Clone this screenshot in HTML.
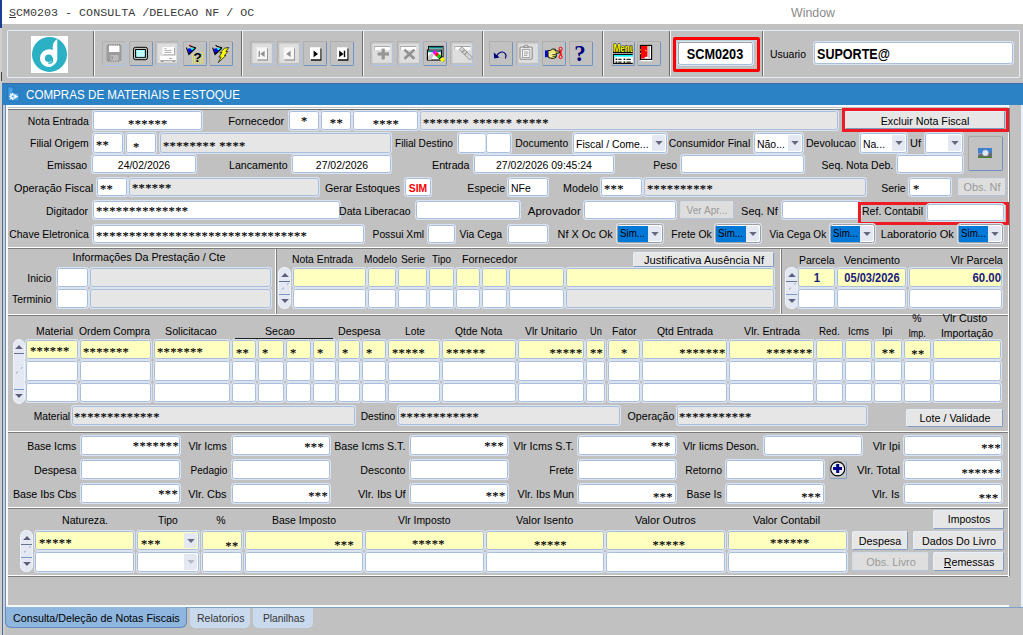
<!DOCTYPE html>
<html><head><meta charset="utf-8"><title>SCM0203</title>
<style>
html,body{margin:0;padding:0}
body{width:1023px;height:635px;overflow:hidden;background:#c1c1c1;font-family:"Liberation Sans",sans-serif;font-size:12px;color:#000;position:relative}
#r{position:absolute;left:0;top:0;width:1023px;height:635px;overflow:hidden}
#r div,#r span,#r svg{position:absolute}
.t{white-space:nowrap;display:block}
.s{font:12.5px/16px "Liberation Serif",serif;letter-spacing:.35px;-webkit-text-stroke:.15px #000}
.f{box-sizing:content-box;border:1px solid #a9bedd;border-radius:2.5px;background:#fff;box-shadow:0 0 0 1px #dbe3ef}
.fy{background:#ffffc0}
.fs{border-color:#9c9ea4}
.fg{background:#e6e6e6}
.da{background:#e4e8f2;border-radius:0 2px 2px 0}
.b{box-sizing:content-box;border:1px solid;border-color:#e8eef8 #7f9cc4 #7f9cc4 #e8eef8;background:#e6e6e6;border-radius:2px}
.bd{border-color:#d4dcea #b4c4dc #b4c4dc #d4dcea;background:#dedede}
.hl{height:1px;background:#fff;box-shadow:0 1px 0 #7c7c7c}
.vl{width:1px;background:#fff;box-shadow:1px 0 0 #7c7c7c}
.red{border:3px solid #ff0000;border-radius:2px}
.sb{border:1px solid #eef2f9;border-radius:6px;background:#e4e8f2}
.tb{border:1px solid;border-color:#adadad #6f92c2 #6f92c2 #adadad;border-radius:2px}
.tbd{border-color:#b2b2b2 #abc6ec #abc6ec #b2b2b2}
</style></head>
<body><div id="r">
<div style="left:0;top:0;width:1023px;height:24px;background:#fff"></div>
<div style="left:0;top:0;width:2px;height:28px;background:#1c3f94"></div>
<span class="t" style="left:9px;top:4.6px;font-family:'Liberation Mono',monospace;font-size:11px;line-height:16px;color:#3a3a3a;transform-origin:0 50%;transform:scaleX(1.062)"><u>S</u>CM0203 - CONSULTA /DELECAO NF / OC</span>
<span class="t" style="top:5.84px;font-size:12px;line-height:14px;color:#8a8a8a;left:791.00px;transform-origin:0 50%;transform:scaleX(1.0310);">Window</span>
<div style="left:7px;top:30px;width:1011px;height:46px;border:1px solid #e4ecf8;border-radius:1px"></div>
<div style="left:31px;top:36px;width:37px;height:37px;background:#fff"></div>
<svg style="left:28px;top:33px" width="44" height="43" viewBox="28 33 44 43"><circle cx="49.5" cy="54.4" r="17.5" fill="#2bb0c4"/><path d="M57.3 39 L57.3 59.6 Q56.4 64.6 50.4 66.9 A9 9 0 0 1 40 58.2 A9 9 0 0 1 49.4 49.2 Q51.4 49.4 52.7 50.3 L52.7 46.4 Q53 41.6 57.3 39 Z" fill="#fff"/><circle cx="48.7" cy="58.2" r="3.8" fill="#2bb0c4"/><path d="M52.4 57.4 L52.4 61.6 Q51.6 63.4 48.4 63.3" fill="none" stroke="#2bb0c4" stroke-width="1.4"/></svg>
<div style="left:93px;top:31px;width:1px;height:45px;background:#6e6e6e"></div>
<div style="left:94px;top:31px;width:1px;height:45px;background:#f4f4f4"></div>
<div style="left:241px;top:31px;width:1px;height:45px;background:#6e6e6e"></div>
<div style="left:242px;top:31px;width:1px;height:45px;background:#f4f4f4"></div>
<div style="left:362px;top:31px;width:1px;height:45px;background:#6e6e6e"></div>
<div style="left:363px;top:31px;width:1px;height:45px;background:#f4f4f4"></div>
<div style="left:482px;top:31px;width:1px;height:45px;background:#6e6e6e"></div>
<div style="left:483px;top:31px;width:1px;height:45px;background:#f4f4f4"></div>
<div style="left:602px;top:31px;width:1px;height:45px;background:#6e6e6e"></div>
<div style="left:603px;top:31px;width:1px;height:45px;background:#f4f4f4"></div>
<div style="left:669px;top:31px;width:1px;height:45px;background:#6e6e6e"></div>
<div style="left:670px;top:31px;width:1px;height:45px;background:#f4f4f4"></div>
<div style="left:762px;top:31px;width:1px;height:45px;background:#6e6e6e"></div>
<div style="left:763px;top:31px;width:1px;height:45px;background:#f4f4f4"></div>
<div class="tb tbd" style="left:102px;top:41px;width:22px;height:23px"></div>
<div class="tb" style="left:129px;top:41px;width:22px;height:23px"></div>
<div class="tb tbd" style="left:155px;top:41px;width:22px;height:23px"></div>
<div class="tb" style="left:183px;top:41px;width:22px;height:23px"></div>
<div class="tb" style="left:209px;top:41px;width:22px;height:23px"></div>
<div class="tb tbd" style="left:250px;top:41px;width:22px;height:23px"></div>
<div class="tb tbd" style="left:277px;top:41px;width:22px;height:23px"></div>
<div class="tb" style="left:303px;top:41px;width:22px;height:23px"></div>
<div class="tb" style="left:330px;top:41px;width:22px;height:23px"></div>
<div class="tb tbd" style="left:370px;top:41px;width:22px;height:23px"></div>
<div class="tb tbd" style="left:397px;top:41px;width:22px;height:23px"></div>
<div class="tb" style="left:423px;top:41px;width:22px;height:23px"></div>
<div class="tb tbd" style="left:450px;top:41px;width:22px;height:23px"></div>
<div class="tb" style="left:489px;top:41px;width:22px;height:23px"></div>
<div class="tb tbd" style="left:516px;top:41px;width:22px;height:23px"></div>
<div class="tb" style="left:542px;top:41px;width:22px;height:23px"></div>
<div class="tb" style="left:569px;top:41px;width:22px;height:23px"></div>
<div class="tb" style="left:611px;top:41px;width:22px;height:23px"></div>
<div class="tb" style="left:637px;top:41px;width:22px;height:23px"></div>
<svg style="left:100px;top:38px" width="570" height="32" viewBox="100 38 570 32"><rect x="157.4" y="43.6" width="19.4" height="19.2" fill="#dedede"/><rect x="252.4" y="43.6" width="19.4" height="19.2" fill="#dedede"/><rect x="279.4" y="43.6" width="19.4" height="19.2" fill="#dedede"/><rect x="372.4" y="43.6" width="19.4" height="19.2" fill="#dedede"/><rect x="399.4" y="43.6" width="19.4" height="19.2" fill="#dedede"/><rect x="452.4" y="43.6" width="19.4" height="19.2" fill="#dedede"/><rect x="518.4" y="43.6" width="19.4" height="19.2" fill="#dedede"/><rect x="106.5" y="45" width="15" height="16" fill="#9c9c9c"/><rect x="109" y="45.5" width="10.5" height="6.5" fill="#fff"/><rect x="110.5" y="55" width="8" height="6" fill="#bcbcbc"/><rect x="111.5" y="56" width="1.5" height="3.5" fill="#9c9c9c"/><path d="M108 44.8H120" stroke="#666" stroke-width="1" stroke-dasharray="1 1.2"/><path d="M108 61.2H120" stroke="#777" stroke-width="1" stroke-dasharray="1.2 1.2"/><rect x="133.5" y="47.3" width="14" height="12.4" rx="2" fill="#c0c0c0" stroke="#000" stroke-width="1"/><rect x="135.6" y="49.5" width="9.8" height="7.8" fill="#9ff" stroke="#000" stroke-width="1"/><rect x="137" y="51" width="7" height="1.1" fill="#e8ffff"/><rect x="137" y="53.2" width="7" height="1.1" fill="#e8ffff"/><rect x="137" y="55.4" width="7" height="1.1" fill="#e8ffff"/><rect x="162.5" y="47" width="11.5" height="7.5" fill="#fff"/><rect x="174" y="48" width="1" height="7" fill="#aaa"/><rect x="163" y="54.4" width="11.5" height="1" fill="#aaa"/><rect x="164.5" y="48.3" width="2" height="0.8" fill="#999"/><rect x="164.5" y="50" width="7" height="0.8" fill="#999"/><rect x="164.5" y="52" width="7" height="0.8" fill="#999"/><rect x="160" y="55.8" width="16" height="4.4" fill="#fff"/><rect x="160" y="60" width="16" height="1" fill="#b0b0b0"/><rect x="169" y="58" width="3.5" height="1" fill="#aaa"/><rect x="161" y="61" width="2.5" height="1" fill="#999"/><rect x="172.5" y="61" width="2.5" height="1" fill="#999"/><path d="M187.6 48.800000000000004L189 54.2L192.6 50.800000000000004L190.4 48.2Z" fill="#0000f0" /><path d="M190.4 48.0L195.2 48.0L192.4 51.0Z" fill="#0ff" /><path d="M186.4 47.6L188.9 54.5L195.6 48.0" fill="none" stroke="#000" stroke-width="1.1" stroke-linejoin="miter"/><path d="M189.4 45.2L191.2 46.6L195.8 47.800000000000004" fill="none" stroke="#000" stroke-width="1.1"/><rect x="189.8" y="44.8" width="1.4" height="1.2" fill="#f00"/><rect x="200.12" y="52.2" width="1" height="1" fill="#ff0"/><rect x="202.15" y="52.2" width="1" height="1" fill="#ff0"/><rect x="192.0" y="54.23" width="1" height="1" fill="#ff0"/><rect x="200.12" y="54.23" width="1" height="1" fill="#ff0"/><rect x="202.15" y="54.23" width="1" height="1" fill="#ff0"/><rect x="192.0" y="56.26" width="1" height="1" fill="#ff0"/><rect x="194.03" y="56.26" width="1" height="1" fill="#ff0"/><rect x="200.12" y="56.26" width="1" height="1" fill="#ff0"/><rect x="202.15" y="56.26" width="1" height="1" fill="#ff0"/><rect x="192.0" y="58.29" width="1" height="1" fill="#ff0"/><rect x="194.03" y="58.29" width="1" height="1" fill="#ff0"/><rect x="198.09" y="58.29" width="1" height="1" fill="#ff0"/><rect x="200.12" y="58.29" width="1" height="1" fill="#ff0"/><rect x="202.15" y="58.29" width="1" height="1" fill="#ff0"/><rect x="192.0" y="60.32" width="1" height="1" fill="#ff0"/><rect x="194.03" y="60.32" width="1" height="1" fill="#ff0"/><rect x="198.09" y="60.32" width="1" height="1" fill="#ff0"/><rect x="200.12" y="60.32" width="1" height="1" fill="#ff0"/><rect x="202.15" y="60.32" width="1" height="1" fill="#ff0"/><rect x="192.0" y="62.35" width="1" height="1" fill="#ff0"/><rect x="194.03" y="62.35" width="1" height="1" fill="#ff0"/><rect x="196.06" y="62.35" width="1" height="1" fill="#ff0"/><rect x="198.09" y="62.35" width="1" height="1" fill="#ff0"/><rect x="200.12" y="62.35" width="1" height="1" fill="#ff0"/><rect x="202.15" y="62.35" width="1" height="1" fill="#ff0"/><text x="193.6" y="61.9" font-family="Liberation Sans" font-weight="bold" font-size="13.5" fill="#000">?</text><path d="M213.79999999999998 48.800000000000004L215.2 54.2L218.79999999999998 50.800000000000004L216.6 48.2Z" fill="#0000f0" /><path d="M216.6 48.0L221.39999999999998 48.0L218.6 51.0Z" fill="#0ff" /><path d="M212.6 47.6L215.1 54.5L221.79999999999998 48.0" fill="none" stroke="#000" stroke-width="1.1" stroke-linejoin="miter"/><path d="M215.6 45.2L217.39999999999998 46.6L222.0 47.800000000000004" fill="none" stroke="#000" stroke-width="1.1"/><path d="M224.6 48.2L228.8 47.4L225.8 51.6L227.8 51.4L224.4 55.6L226 55.4L218.2 62.6L221.2 57L218.8 57.2L222 52.6L219.8 52.8Z" fill="#ff0" stroke="#222" stroke-width=".8" stroke-linejoin="miter"/><rect x="257.6" y="48.5" width="10.4" height="12.2" fill="#9a9a9a"/><rect x="256.6" y="47.3" width="10.4" height="12" fill="#f6f6f6"/><rect x="258.6" y="50.9" width="1.3" height="6" fill="#909090"/><path d="M264.6 50.699999999999996V57.1L260.2 53.9Z" fill="#909090" /><rect x="284.6" y="48.5" width="10.4" height="12.2" fill="#9a9a9a"/><rect x="283.6" y="47.3" width="10.4" height="12" fill="#f6f6f6"/><path d="M290.6 50.699999999999996V57.1L286.2 53.9Z" fill="#909090" /><rect x="311.0" y="48.5" width="10.4" height="12.2" fill="#000"/><rect x="310.0" y="47.3" width="10.4" height="12" fill="#fff"/><path d="M313.59999999999997 50.5V57.3L318.0 53.9Z" fill="#000" /><rect x="338.0" y="48.5" width="10.4" height="12.2" fill="#000"/><rect x="337.0" y="47.3" width="10.4" height="12" fill="#fff"/><path d="M339.2 50.5V57.3L343.59999999999997 53.9Z" fill="#000" /><rect x="343.8" y="50.699999999999996" width="1.4" height="6.4" fill="#000"/><rect x="374.4" y="46.6" width="15.6" height="3.4" fill="#fff"/><rect x="374.4" y="46.2" width="15.6" height="0.8" fill="#999"/><rect x="374.0" y="46.2" width="0.8" height="3.8" fill="#aaa"/><rect x="381.6" y="48.6" width="3.2" height="10.8" fill="#969696"/><rect x="377.6" y="52.4" width="11.4" height="3.2" fill="#969696"/><rect x="400.6" y="46.6" width="15.6" height="3.4" fill="#fff"/><rect x="400.6" y="46.2" width="15.6" height="0.8" fill="#999"/><rect x="400.20000000000005" y="46.2" width="0.8" height="3.8" fill="#aaa"/><path d="M404.4 49.6L414.4 58.8M414.4 49.6L404.4 58.8" stroke="#909090" stroke-width="2.6"/><rect x="428.6" y="46.4" width="14.4" height="10.6" fill="#fff"/><rect x="428.6" y="46.4" width="14.4" height="10.6" fill="none" stroke="#000" stroke-width="1"/><rect x="429.2" y="47" width="13.2" height="1.6" fill="#088"/><rect x="427.4" y="50" width="14" height="10" fill="#fff" stroke="#000" stroke-width="1.1"/><rect x="428" y="50.6" width="12.8" height="1.6" fill="#088"/><path d="M428 60L428 56.5L431.5 53L434 55L431 60Z" fill="#c8c8c8" /><g transform="translate(433.6,51.4) rotate(43)"><rect x="0" y="-1.8" width="3.2" height="3.6" fill="#f0f"/><rect x="3.2" y="-1.8" width="2.6" height="3.6" fill="#f00"/><rect x="5.8" y="-1.8" width="3" height="3.6" fill="#0c0"/><rect x="8.8" y="-1.8" width="1.2" height="3.6" fill="#000"/><rect x="10" y="-1.8" width="3.6" height="3.6" fill="#ff0"/><path d="M13.6 -1.8L15.2 0L13.6 1.8Z" fill="#bb0"/></g><rect x="454.8" y="46.6" width="15.6" height="3.4" fill="#fff"/><rect x="454.8" y="46.2" width="15.6" height="0.8" fill="#999"/><rect x="454.40000000000003" y="46.2" width="0.8" height="3.8" fill="#aaa"/><g transform="translate(460.6,48) rotate(45)"><rect x="0" y="-1.8" width="15" height="3.8" fill="#d2d2d2" stroke="#9a9a9a" stroke-width=".9"/><rect x="3.6" y="-2" width="1" height="4.4" fill="#8a8a8a"/><rect x="7" y="-2" width="1" height="4.4" fill="#8a8a8a"/></g><path d="M496.6 56.6C498 51.8 503 50.8 505.2 53.6C506.6 55.4 506 57.2 505.2 58.4" fill="none" stroke="#000080" stroke-width="1.05"/><path d="M493.8 52.6L494.2 58.4L499.6 57.4Z" fill="#000080" /><rect x="520" y="47" width="12.2" height="12.2" rx="1.2" fill="#ececec" stroke="#8c8c8c" stroke-width="1.1"/><rect x="522.4" y="49.6" width="7.4" height="8" fill="#f4f4f4" stroke="#9a9a9a" stroke-width=".9"/><path d="M523.6 47.6V46.4H524.8V45.2H527.4V46.4H528.6V47.6Z" fill="#e0e0e0" stroke="#8c8c8c" stroke-width=".9"/><rect x="524" y="51.6" width="4.4" height="0.8" fill="#999"/><rect x="524" y="53.4" width="4.4" height="0.8" fill="#999"/><rect x="524" y="55.2" width="3.4" height="0.8" fill="#999"/><rect x="545" y="50.4" width="2.8" height="6.8" fill="#0000e0"/><path d="M548 50.6L550.6 50.4L552.6 49L555.4 49.2L555 50.8L559.6 51.2L559.6 53L555.6 53.2L556.4 54.2L556.2 57.2L553.6 58.4L550.4 58.2L548 57Z" fill="#e8e060" stroke="#000" stroke-width=".9"/><rect x="549.2" y="51.4" width="0.8" height="0.8" fill="#fff"/><rect x="550.8000000000001" y="51.4" width="0.8" height="0.8" fill="#fff"/><rect x="552.4000000000001" y="51.4" width="0.8" height="0.8" fill="#fff"/><rect x="554.0" y="51.4" width="0.8" height="0.8" fill="#fff"/><rect x="550.0" y="53.0" width="0.8" height="0.8" fill="#fff"/><rect x="551.6" y="53.0" width="0.8" height="0.8" fill="#fff"/><rect x="553.2" y="53.0" width="0.8" height="0.8" fill="#fff"/><rect x="554.8" y="53.0" width="0.8" height="0.8" fill="#fff"/><rect x="549.2" y="54.6" width="0.8" height="0.8" fill="#fff"/><rect x="550.8000000000001" y="54.6" width="0.8" height="0.8" fill="#fff"/><rect x="552.4000000000001" y="54.6" width="0.8" height="0.8" fill="#fff"/><rect x="554.0" y="54.6" width="0.8" height="0.8" fill="#fff"/><rect x="550.0" y="56.2" width="0.8" height="0.8" fill="#fff"/><rect x="551.6" y="56.2" width="0.8" height="0.8" fill="#fff"/><rect x="553.2" y="56.2" width="0.8" height="0.8" fill="#fff"/><rect x="554.8" y="56.2" width="0.8" height="0.8" fill="#fff"/><path d="M552.4 54.6H556M552.6 56.4H556" stroke="#000" stroke-width=".7"/><circle cx="560.6" cy="48.8" r="1.6" fill="none" stroke="#f00" stroke-width="1"/><circle cx="560.6" cy="57" r="1.6" fill="none" stroke="#f00" stroke-width="1"/><path d="M559.8 50.2L561.6 55.4M561.6 50.4L559.8 55.6" stroke="#f00" stroke-width="1"/><text x="574.2" y="61.2" font-family="Liberation Serif" font-weight="bold" font-size="24" fill="#000080" textLength="11.4" lengthAdjust="spacingAndGlyphs">?</text><clipPath id="mc"><rect x="611.5" y="42" width="21.3" height="23"/></clipPath><g clip-path="url(#mc)"><rect x="613" y="51.6" width="21" height="1.4" fill="#000"/><text x="613.4" y="51.6" font-family="Liberation Sans" font-weight="bold" font-size="10.5" fill="#ff0" stroke="#000" stroke-width="1.2" paint-order="stroke" textLength="21.4" lengthAdjust="spacingAndGlyphs">Menu</text><rect x="613.6" y="54.4" width="22" height="9" fill="#fff" stroke="#000" stroke-width="1.1"/><rect x="614.2" y="55" width="20" height="1.6" fill="#0ff"/><rect x="615.6" y="58.6" width="1.6" height="1.4" fill="#000"/><rect x="618.2" y="58.800000000000004" width="3.4" height="1" fill="#000"/><rect x="623.6" y="58.6" width="1.6" height="1.4" fill="#000"/><rect x="626.4" y="58.800000000000004" width="4.4" height="1" fill="#000"/><rect x="615.6" y="61.4" width="1.6" height="1.4" fill="#000"/><rect x="618.2" y="61.6" width="3.4" height="1" fill="#000"/><rect x="623.6" y="61.4" width="1.6" height="1.4" fill="#000"/><rect x="626.4" y="61.6" width="4.4" height="1" fill="#000"/></g><rect x="640.6" y="59.4" width="11.6" height="1.8" fill="#fff"/><rect x="640.4" y="45.4" width="11.2" height="14" fill="#fff" stroke="#000" stroke-width="1.1"/><rect x="647.6" y="46" width="2.4" height="12" fill="#c8c8c8"/><path d="M641 46H647.4V56.4L644.6 57.2V58.6H641Z" fill="#f00" /><rect x="645.2" y="50" width="1.2" height="1.2" fill="#ff0"/><rect x="640" y="49.4" width="1" height="1" fill="#ff0"/><rect x="640" y="53" width="1" height="1" fill="#ff0"/></svg>
<div class="red" style="left:673px;top:37px;width:81px;height:29px;border-color:#ff0000;border-radius:2px"></div>
<div style="left:676px;top:40px;width:81px;height:2px;background:#b9cfda"></div><div style="left:676px;top:40px;width:2px;height:29px;background:#b9cfda"></div>
<div class="f" style="left:678px;top:42px;width:73px;height:21px"></div>
<div style="left:678px;top:42px;width:74px;height:1px;background:#a2a2a2"></div><div style="left:678px;top:42px;width:1px;height:22px;background:#a2a2a2"></div>
<span class="t" style="top:46.05px;font-size:14px;line-height:16px;font-weight:bold;left:715.30px;transform:translateX(-50%) scaleX(0.9076);">SCM0203</span>
<span class="t" style="top:48.49px;font-size:11px;line-height:13px;left:770.40px;transform-origin:0 50%;transform:scaleX(0.9498);">Usuario</span>
<div class="f" style="left:814px;top:42px;width:197px;height:20px"></div>
<span class="t" style="top:45.63px;font-size:14.5px;line-height:16.5px;font-weight:bold;left:817.00px;transform-origin:0 50%;transform:scaleX(0.8666);">SUPORTE@</span>
<div style="left:2px;top:83px;width:1021px;height:22px;background:#2b82c4"></div>
<div style="left:2px;top:83px;width:1021px;height:1px;background:#3a6aa8"></div>
<div style="left:2px;top:104px;width:1px;height:531px;background:#4a6c9c"></div>
<div style="left:0;top:28px;width:2px;height:607px;background:#cfcfcf"></div>
<div style="left:1px;top:72px;width:1px;height:9px;background:#444"></div>
<svg style="left:6px;top:85px" width="15" height="18" viewBox="6 85 15 18"><path d="M7.9 86.9H13.2V92.6H19V100.9H7.9Z" fill="#469fe2" stroke="#2473b6" stroke-width=".9"/><path d="M15.6 87.2V90H18.3Z" fill="#469fe2" stroke="#2473b6" stroke-width=".7"/><path d="M13 93.2V99.7A3.3 3.3 0 0 1 13 93.2Z" fill="#fff"/><path d="M13 92.9V100 M9.3 96.4H13 M10.2 93.7L13 96.4 M10.2 99.2L13 96.4" stroke="#fff" stroke-width="1.1"/><circle cx="12.4" cy="96.4" r=".9" fill="#469fe2"/><path d="M14.2 94V99L18.3 96.5Z" fill="#fff"/></svg>
<span class="t" style="top:87.74px;font-size:12px;line-height:14px;color:#fff;left:26.30px;transform-origin:0 50%;transform:scaleX(0.9686);">COMPRAS DE MATERIAIS E ESTOQUE</span>
<div style="left:6px;top:105px;width:1003px;height:502px;background:#f6f9ff"></div>
<div style="left:8px;top:107px;width:1000px;height:498px;background:#c1c1c1"></div>
<div style="left:8px;top:108px;width:1001px;height:1px;background:#fff"></div>
<div style="left:8px;top:109px;width:1001px;height:1px;background:#747474"></div>
<div style="left:1008px;top:108px;width:1px;height:468px;background:#fff"></div>
<div style="left:1009px;top:108px;width:1px;height:468px;background:#7c7c7c"></div>
<div style="left:1010px;top:105px;width:11px;height:500px;background:#c1c1c1"></div>
<div style="left:1008px;top:577px;width:13px;height:28px;background:#c1c1c1"></div>
<div style="left:1021px;top:105px;width:2px;height:503px;background:#eaf0fa"></div>
<div style="left:5px;top:105px;width:1px;height:502px;background:#6c90bc"></div>
<div style="left:6px;top:607px;width:1017px;height:1px;background:#7f9fcc"></div>
<div style="left:3px;top:105px;width:2px;height:530px;background:#cdcdcd"></div>
<span class="t" style="top:115.19px;font-size:11px;line-height:13px;right:934.60px;transform-origin:100% 50%;transform:scaleX(0.9411);">Nota Entrada</span>
<div class="f" style="left:93px;top:111px;width:107px;height:17px"></div>
<span class="t s" style="top:116.10px;left:147.90px;transform:translateX(-50%);">******</span>
<span class="t" style="top:115.19px;font-size:11px;line-height:13px;right:738.50px;transform-origin:100% 50%;transform:scaleX(0.9956);">Fornecedor</span>
<div class="f" style="left:289px;top:111px;width:28px;height:17px"></div>
<span class="t s" style="top:113.30px;left:304.40px;transform:translateX(-50%);">*</span>
<div class="f" style="left:321px;top:111px;width:28px;height:17px"></div>
<span class="t s" style="top:114.90px;left:336.40px;transform:translateX(-50%);">**</span>
<div class="f" style="left:353px;top:111px;width:63px;height:17px"></div>
<span class="t s" style="top:116.00px;left:385.90px;transform:translateX(-50%);">****</span>
<div class="f fg" style="left:420px;top:111px;width:416px;height:17px"></div>
<span class="t s" style="top:114.90px;left:423.00px;">******* ****** *****</span>
<div class="red" style="left:842px;top:108px;width:161px;height:18px;border-color:#ed1c24;border-radius:0px"></div>
<div class="b" style="left:845px;top:111px;width:158px;height:16px"></div>
<span class="t" style="top:115.19px;font-size:11px;line-height:13px;left:925.00px;transform:translateX(-50%) scaleX(0.9728);">Excluir Nota Fiscal</span>
<span class="t" style="top:136.99px;font-size:11px;line-height:13px;right:934.00px;transform-origin:100% 50%;transform:scaleX(0.9500);">Filial Origem</span>
<div class="f" style="left:93px;top:133px;width:28px;height:18px"></div>
<span class="t s" style="top:137.40px;left:96.00px;">**</span>
<div class="f" style="left:126px;top:133px;width:28px;height:18px"></div>
<span class="t s" style="top:139.40px;left:133.00px;">*</span>
<div class="f fg" style="left:160px;top:133px;width:229px;height:18px"></div>
<span class="t s" style="top:138.40px;left:163.00px;">******** ****</span>
<span class="t" style="top:136.99px;font-size:11px;line-height:13px;right:570.00px;transform-origin:100% 50%;transform:scaleX(0.9212);">Filial Destino</span>
<div class="f" style="left:458px;top:133px;width:26px;height:18px"></div>
<div class="f" style="left:486px;top:133px;width:23px;height:18px"></div>
<span class="t" style="top:136.99px;font-size:11px;line-height:13px;right:454.30px;transform-origin:100% 50%;transform:scaleX(0.9422);">Documento</span>
<div class="f" style="left:573px;top:133px;width:92px;height:18px"></div>
<div class="da" style="left:652px;top:135px;width:13px;height:16px"></div>
<svg class="a" style="left:654.5px;top:141.0px" width="8" height="5"><path d="M.3 0H7.7L4 4Z" fill="#66687e"/></svg>
<span class="t" style="top:137.69px;font-size:11px;line-height:13px;left:576.40px;transform-origin:0 50%;transform:scaleX(0.9500);">Fiscal / Come...</span>
<span class="t" style="top:136.99px;font-size:11px;line-height:13px;right:273.00px;transform-origin:100% 50%;transform:scaleX(0.9444);">Consumidor Final</span>
<div class="f" style="left:754px;top:133px;width:47px;height:18px"></div>
<div class="da" style="left:788px;top:135px;width:13px;height:16px"></div>
<svg class="a" style="left:790.5px;top:141.0px" width="8" height="5"><path d="M.3 0H7.7L4 4Z" fill="#66687e"/></svg>
<span class="t" style="top:137.69px;font-size:11px;line-height:13px;left:757.40px;transform-origin:0 50%;transform:scaleX(0.9500);">Não...</span>
<span class="t" style="top:136.99px;font-size:11px;line-height:13px;right:167.50px;transform-origin:100% 50%;transform:scaleX(0.9620);">Devolucao</span>
<div class="f" style="left:860px;top:133px;width:45px;height:18px"></div>
<div class="da" style="left:892px;top:135px;width:13px;height:16px"></div>
<svg class="a" style="left:894.5px;top:141.0px" width="8" height="5"><path d="M.3 0H7.7L4 4Z" fill="#66687e"/></svg>
<span class="t" style="top:137.69px;font-size:11px;line-height:13px;left:863.40px;transform-origin:0 50%;transform:scaleX(0.9500);">Na...</span>
<span class="t" style="top:136.99px;font-size:11px;line-height:13px;left:910.00px;transform-origin:0 50%;transform:scaleX(1.0000);">Uf</span>
<div class="f" style="left:925px;top:133px;width:36px;height:18px"></div>
<div class="da" style="left:948px;top:135px;width:13px;height:16px"></div>
<svg class="a" style="left:950.5px;top:141.0px" width="8" height="5"><path d="M.3 0H7.7L4 4Z" fill="#66687e"/></svg>
<div class="b" style="left:968px;top:136px;width:33px;height:33px;background:#c2c2c2;border-color:#a8a8a8 #6f8fc0 #6f8fc0 #a8a8a8"></div>
<svg style="left:978px;top:148px" width="14" height="10" viewBox="0 0 14 10"><rect width="14" height="10" fill="#3f7fd0"/><rect y="5" width="14" height="3" fill="#7f9cc0"/><path d="M0 7L4 5.5L8 7L11 4.5L14 5V10H0Z" fill="#6a6a72"/><circle cx="7.4" cy="5" r="3.1" fill="#dce8f4" stroke="#9ab" stroke-width=".6"/><rect y="8.6" width="14" height="1.4" fill="#4c7a2c"/></svg>
<span class="t" style="top:158.69px;font-size:11px;line-height:13px;right:935.50px;transform-origin:100% 50%;transform:scaleX(0.9500);">Emissao</span>
<div class="f" style="left:92px;top:155px;width:102px;height:16px"></div>
<span class="t" style="top:158.69px;font-size:11px;line-height:13px;left:144.00px;transform:translateX(-50%) scaleX(0.9500);">24/02/2026</span>
<span class="t" style="top:158.69px;font-size:11px;line-height:13px;right:735.50px;transform-origin:100% 50%;transform:scaleX(0.9663);">Lancamento</span>
<div class="f" style="left:292px;top:155px;width:97px;height:16px"></div>
<span class="t" style="top:158.69px;font-size:11px;line-height:13px;left:341.50px;transform:translateX(-50%) scaleX(0.9500);">27/02/2026</span>
<span class="t" style="top:158.69px;font-size:11px;line-height:13px;right:553.00px;transform-origin:100% 50%;transform:scaleX(0.9734);">Entrada</span>
<div class="f" style="left:474px;top:155px;width:138px;height:16px"></div>
<span class="t" style="top:158.69px;font-size:11px;line-height:13px;left:544.00px;transform:translateX(-50%) scaleX(0.9500);">27/02/2026 09:45:24</span>
<span class="t" style="top:158.69px;font-size:11px;line-height:13px;right:346.00px;transform-origin:100% 50%;transform:scaleX(0.9500);">Peso</span>
<div class="f" style="left:681px;top:155px;width:121px;height:16px"></div>
<span class="t" style="top:158.69px;font-size:11px;line-height:13px;right:130.00px;transform-origin:100% 50%;transform:scaleX(0.9520);">Seq. Nota Deb.</span>
<div class="f" style="left:897px;top:155px;width:64px;height:16px"></div>
<span class="t" style="top:181.69px;font-size:11px;line-height:13px;right:930.00px;transform-origin:100% 50%;transform:scaleX(0.9865);">Operação Fiscal</span>
<div class="f" style="left:97px;top:178px;width:28px;height:16px"></div>
<span class="t s" style="top:181.40px;left:100.00px;">**</span>
<div class="f fg" style="left:129px;top:178px;width:188px;height:16px"></div>
<span class="t s" style="top:179.90px;left:132.00px;">******</span>
<span class="t" style="top:181.69px;font-size:11px;line-height:13px;right:623.00px;transform-origin:100% 50%;transform:scaleX(0.9736);">Gerar Estoques</span>
<div class="f" style="left:405px;top:178px;width:24px;height:16px"></div>
<span class="t" style="top:181.69px;font-size:11px;line-height:13px;font-weight:bold;color:#ff0000;left:418.00px;transform:translateX(-50%) scaleX(0.9409);">SIM</span>
<span class="t" style="top:181.69px;font-size:11px;line-height:13px;right:518.20px;transform-origin:100% 50%;transform:scaleX(0.9659);">Especie</span>
<div class="f" style="left:508px;top:178px;width:38px;height:16px"></div>
<span class="t" style="top:181.69px;font-size:11px;line-height:13px;left:511.00px;transform-origin:0 50%;transform:scaleX(0.9500);">NFe</span>
<span class="t" style="top:181.69px;font-size:11px;line-height:13px;right:425.00px;transform-origin:100% 50%;transform:scaleX(0.9702);">Modelo</span>
<div class="f" style="left:601px;top:178px;width:39px;height:16px"></div>
<span class="t s" style="top:181.40px;left:604.00px;">***</span>
<div class="f fg" style="left:644px;top:178px;width:220px;height:16px"></div>
<span class="t s" style="top:181.40px;left:647.00px;">**********</span>
<span class="t" style="top:181.69px;font-size:11px;line-height:13px;right:117.50px;transform-origin:100% 50%;transform:scaleX(0.9541);">Serie</span>
<div class="f" style="left:909px;top:178px;width:40px;height:16px"></div>
<span class="t s" style="top:181.40px;left:913.00px;">*</span>
<div class="b bd" style="left:958px;top:178px;width:46px;height:16px"></div>
<span class="t" style="top:181.19px;font-size:11px;line-height:13px;color:#9a9a9a;left:982.00px;transform:translateX(-50%) scaleX(0.9923);">Obs. Nf</span>
<span class="t" style="top:204.69px;font-size:11px;line-height:13px;right:934.50px;transform-origin:100% 50%;transform:scaleX(0.9541);">Digitador</span>
<div class="f" style="left:93px;top:201px;width:245px;height:16px"></div>
<span class="t s" style="top:203.40px;left:96.00px;">**************</span>
<span class="t" style="top:204.69px;font-size:11px;line-height:13px;right:612.00px;transform-origin:100% 50%;transform:scaleX(0.9584);">Data Liberacao</span>
<div class="f" style="left:416px;top:201px;width:102px;height:16px"></div>
<span class="t" style="top:204.69px;font-size:11px;line-height:13px;right:442.00px;transform-origin:100% 50%;transform:scaleX(1.0444);">Aprovador</span>
<div class="f" style="left:584px;top:201px;width:90px;height:16px"></div>
<div class="b bd" style="left:680px;top:201px;width:52px;height:16px"></div>
<span class="t" style="top:204.19px;font-size:11px;line-height:13px;color:#9a9a9a;left:707.00px;transform:translateX(-50%) scaleX(0.9184);">Ver Apr...</span>
<span class="t" style="top:204.69px;font-size:11px;line-height:13px;right:245.40px;transform-origin:100% 50%;transform:scaleX(0.9977);">Seq. Nf</span>
<div class="f" style="left:782px;top:201px;width:77px;height:16px"></div>
<div class="red" style="left:858px;top:202px;width:145px;height:17px;border-color:#ed1c24;border-radius:0px"></div>
<span class="t" style="top:204.89px;font-size:11px;line-height:13px;left:861.50px;transform-origin:0 50%;transform:scaleX(0.9593);">Ref. Contabil</span>
<div class="f" style="left:927px;top:204px;width:75px;height:15px"></div>
<span class="t" style="top:227.69px;font-size:11px;line-height:13px;right:934.50px;transform-origin:100% 50%;transform:scaleX(0.9491);">Chave Eletronica</span>
<div class="f" style="left:93px;top:225px;width:269px;height:16px"></div>
<span class="t s" style="top:228.40px;left:96.00px;">********************************</span>
<span class="t" style="top:227.69px;font-size:11px;line-height:13px;right:599.00px;transform-origin:100% 50%;transform:scaleX(0.9361);">Possui Xml</span>
<div class="f" style="left:428px;top:225px;width:25px;height:16px"></div>
<span class="t" style="top:227.69px;font-size:11px;line-height:13px;right:520.50px;transform-origin:100% 50%;transform:scaleX(0.9434);">Via Cega</span>
<div class="f" style="left:508px;top:225px;width:38px;height:16px"></div>
<span class="t" style="top:227.69px;font-size:11px;line-height:13px;right:410.00px;transform-origin:100% 50%;transform:scaleX(0.9889);">Nf X Oc Ok</span>
<div class="f fs" style="left:617px;top:224px;width:44px;height:17px"></div>
<div class="da" style="left:648px;top:226px;width:13px;height:15px"></div>
<svg class="a" style="left:650.5px;top:231.5px" width="8" height="5"><path d="M.3 0H7.7L4 4Z" fill="#66687e"/></svg>
<div style="position:absolute;left:618px;top:226px;width:30px;height:16px;background:#0078d8"></div>
<span class="t" style="top:227.49px;font-size:11px;line-height:13px;left:620.40px;transform-origin:0 50%;transform:scaleX(0.8857);">Sim...</span>
<span class="t" style="top:227.69px;font-size:11px;line-height:13px;right:311.20px;transform-origin:100% 50%;transform:scaleX(0.9466);">Frete Ok</span>
<div class="f fs" style="left:715px;top:224px;width:44px;height:17px"></div>
<div class="da" style="left:746px;top:226px;width:13px;height:15px"></div>
<svg class="a" style="left:748.5px;top:231.5px" width="8" height="5"><path d="M.3 0H7.7L4 4Z" fill="#66687e"/></svg>
<div style="position:absolute;left:716px;top:226px;width:30px;height:16px;background:#0078d8"></div>
<span class="t" style="top:227.49px;font-size:11px;line-height:13px;left:718.40px;transform-origin:0 50%;transform:scaleX(0.8857);">Sim...</span>
<span class="t" style="top:227.69px;font-size:11px;line-height:13px;right:196.70px;transform-origin:100% 50%;transform:scaleX(0.9105);">Via Cega Ok</span>
<div class="f fs" style="left:830px;top:224px;width:43px;height:17px"></div>
<div class="da" style="left:860px;top:226px;width:13px;height:15px"></div>
<svg class="a" style="left:862.5px;top:231.5px" width="8" height="5"><path d="M.3 0H7.7L4 4Z" fill="#66687e"/></svg>
<div style="position:absolute;left:831px;top:226px;width:29px;height:16px;background:#0078d8"></div>
<span class="t" style="top:227.49px;font-size:11px;line-height:13px;left:833.40px;transform-origin:0 50%;transform:scaleX(0.8857);">Sim...</span>
<span class="t" style="top:227.69px;font-size:11px;line-height:13px;right:69.00px;transform-origin:100% 50%;transform:scaleX(1.0033);">Laboratorio Ok</span>
<div class="f fs" style="left:958px;top:224px;width:43px;height:17px"></div>
<div class="da" style="left:988px;top:226px;width:13px;height:15px"></div>
<svg class="a" style="left:990.5px;top:231.5px" width="8" height="5"><path d="M.3 0H7.7L4 4Z" fill="#66687e"/></svg>
<div style="position:absolute;left:959px;top:226px;width:29px;height:16px;background:#0078d8"></div>
<span class="t" style="top:227.49px;font-size:11px;line-height:13px;left:961.40px;transform-origin:0 50%;transform:scaleX(0.8857);">Sim...</span>
<div class="hl" style="left:8px;top:247px;width:1000px"></div>
<div class="vl" style="left:275px;top:249px;height:65px"></div>
<div class="vl" style="left:780px;top:249px;height:65px"></div>
<span class="t" style="top:250.99px;font-size:11px;line-height:13px;left:148.50px;transform:translateX(-50%) scaleX(0.9776);">Informações Da Prestação / Cte</span>
<span class="t" style="top:272.19px;font-size:11px;line-height:13px;right:971.00px;transform-origin:100% 50%;transform:scaleX(0.9500);">Inicio</span>
<div class="f" style="left:57px;top:268px;width:29px;height:17px"></div>
<div class="f fg" style="left:90px;top:268px;width:179px;height:17px"></div>
<span class="t" style="top:293.19px;font-size:11px;line-height:13px;right:971.00px;transform-origin:100% 50%;transform:scaleX(0.9500);">Terminio</span>
<div class="f" style="left:57px;top:289px;width:29px;height:17px"></div>
<div class="f fg" style="left:90px;top:289px;width:179px;height:17px"></div>
<div class="sb" style="left:278px;top:267px;width:11px;height:40px"></div>
<svg class="a" style="left:280.5px;top:272.5px" width="8" height="4"><path d="M.2 4H7.8L4 0Z" fill="#5a5f7a"/></svg>
<svg class="a" style="left:280.5px;top:299px" width="8" height="4"><path d="M.2 0H7.8L4 4Z" fill="#5a5f7a"/></svg>
<div style="position:absolute;left:279px;top:280.5px;width:11px;height:1px;background:#65738f"></div>
<div style="position:absolute;left:279px;top:293.5px;width:11px;height:1px;background:#7c98c4"></div>
<svg class="a" style="left:280.5px;top:283.0px" width="9" height="8"><path d="M6 1.6L7.6 .2M1 6.4L2.8 4.8" stroke="#8a9cc0" stroke-width="1"/></svg>
<div class="f fy" style="left:293px;top:268px;width:71px;height:17px"></div>
<div class="f" style="left:293px;top:289px;width:71px;height:17px"></div>
<div class="f fy" style="left:368px;top:268px;width:26px;height:17px"></div>
<div class="f" style="left:368px;top:289px;width:26px;height:17px"></div>
<div class="f fy" style="left:398px;top:268px;width:27px;height:17px"></div>
<div class="f" style="left:398px;top:289px;width:27px;height:17px"></div>
<div class="f fy" style="left:429px;top:268px;width:23px;height:17px"></div>
<div class="f" style="left:429px;top:289px;width:23px;height:17px"></div>
<div class="f fy" style="left:456px;top:268px;width:22px;height:17px"></div>
<div class="f" style="left:456px;top:289px;width:22px;height:17px"></div>
<div class="f fy" style="left:482px;top:268px;width:23px;height:17px"></div>
<div class="f" style="left:482px;top:289px;width:23px;height:17px"></div>
<div class="f fy" style="left:509px;top:268px;width:53px;height:17px"></div>
<div class="f" style="left:509px;top:289px;width:53px;height:17px"></div>
<div class="f fy" style="left:566px;top:268px;width:206px;height:17px"></div>
<div class="f fg" style="left:566px;top:289px;width:206px;height:17px"></div>
<span class="t" style="top:252.99px;font-size:11px;line-height:13px;left:292.40px;transform-origin:0 50%;transform:scaleX(0.9411);">Nota Entrada</span>
<span class="t" style="top:252.99px;font-size:11px;line-height:13px;left:364.40px;transform-origin:0 50%;transform:scaleX(0.9148);">Modelo</span>
<span class="t" style="top:252.99px;font-size:11px;line-height:13px;left:400.50px;transform-origin:0 50%;transform:scaleX(0.9346);">Serie</span>
<span class="t" style="top:252.99px;font-size:11px;line-height:13px;left:431.50px;transform-origin:0 50%;transform:scaleX(0.9052);">Tipo</span>
<span class="t" style="top:252.99px;font-size:11px;line-height:13px;left:462.40px;transform-origin:0 50%;transform:scaleX(0.9832);">Fornecedor</span>
<div class="b" style="left:633px;top:252px;width:139px;height:13px"></div>
<span class="t" style="top:253.69px;font-size:11px;line-height:13px;left:703.50px;transform:translateX(-50%) scaleX(1.0117);">Justificativa Ausência Nf</span>
<div class="sb" style="left:785px;top:267px;width:11px;height:40px"></div>
<svg class="a" style="left:787.5px;top:272.5px" width="8" height="4"><path d="M.2 4H7.8L4 0Z" fill="#5a5f7a"/></svg>
<svg class="a" style="left:787.5px;top:299px" width="8" height="4"><path d="M.2 0H7.8L4 4Z" fill="#5a5f7a"/></svg>
<div style="position:absolute;left:786px;top:280.5px;width:11px;height:1px;background:#65738f"></div>
<div style="position:absolute;left:786px;top:293.5px;width:11px;height:1px;background:#7c98c4"></div>
<svg class="a" style="left:787.5px;top:283.0px" width="9" height="8"><path d="M6 1.6L7.6 .2M1 6.4L2.8 4.8" stroke="#8a9cc0" stroke-width="1"/></svg>
<div class="f fy" style="left:798px;top:268px;width:35px;height:17px"></div>
<span class="t" style="top:271.34px;font-size:12px;line-height:14px;font-weight:bold;color:#1a1a7c;left:816.50px;transform:translateX(-50%) scaleX(0.9500);">1</span>
<div class="f fy" style="left:837px;top:268px;width:67px;height:17px"></div>
<span class="t" style="top:271.34px;font-size:12px;line-height:14px;font-weight:bold;color:#1a1a7c;left:871.50px;transform:translateX(-50%) scaleX(0.9208);">05/03/2026</span>
<div class="f fy" style="left:909px;top:268px;width:91px;height:17px"></div>
<span class="t" style="top:271.34px;font-size:12px;line-height:14px;font-weight:bold;color:#1a1a7c;right:22.00px;transform-origin:100% 50%;transform:scaleX(0.9491);">60.00</span>
<div class="f" style="left:798px;top:289px;width:35px;height:17px"></div>
<div class="f" style="left:837px;top:289px;width:67px;height:17px"></div>
<div class="f" style="left:909px;top:289px;width:91px;height:17px"></div>
<span class="t" style="top:253.99px;font-size:11px;line-height:13px;left:799.00px;transform-origin:0 50%;transform:scaleX(0.9545);">Parcela</span>
<span class="t" style="top:253.99px;font-size:11px;line-height:13px;left:843.50px;transform-origin:0 50%;transform:scaleX(0.9743);">Vencimento</span>
<span class="t" style="top:253.99px;font-size:11px;line-height:13px;right:20.60px;transform-origin:100% 50%;transform:scaleX(0.9741);">Vlr Parcela</span>
<div class="hl" style="left:8px;top:314px;width:1000px"></div>
<div class="sb" style="left:13px;top:339px;width:10px;height:63px"></div>
<svg class="a" style="left:15.0px;top:344.5px" width="8" height="4"><path d="M.2 4H7.8L4 0Z" fill="#5a5f7a"/></svg>
<svg class="a" style="left:15.0px;top:394px" width="8" height="4"><path d="M.2 0H7.8L4 4Z" fill="#5a5f7a"/></svg>
<div style="position:absolute;left:14px;top:352.5px;width:10px;height:1px;background:#65738f"></div>
<div style="position:absolute;left:14px;top:388.5px;width:10px;height:1px;background:#7c98c4"></div>
<svg class="a" style="left:15.0px;top:366.5px" width="9" height="8"><path d="M6 1.6L7.6 .2M1 6.4L2.8 4.8" stroke="#8a9cc0" stroke-width="1"/></svg>
<div class="f fy" style="left:26px;top:340px;width:50px;height:17px"></div>
<span class="t s" style="top:342.90px;left:30.00px;">******</span>
<div class="f" style="left:26px;top:361px;width:50px;height:18px"></div>
<div class="f" style="left:26px;top:383px;width:50px;height:17px"></div>
<div class="f fy" style="left:80px;top:340px;width:69px;height:17px"></div>
<span class="t s" style="top:343.90px;left:83.00px;">*******</span>
<div class="f" style="left:80px;top:361px;width:69px;height:18px"></div>
<div class="f" style="left:80px;top:383px;width:69px;height:17px"></div>
<div class="f fy" style="left:154px;top:340px;width:74px;height:17px"></div>
<span class="t s" style="top:343.90px;left:157.00px;">*******</span>
<div class="f" style="left:154px;top:361px;width:74px;height:18px"></div>
<div class="f" style="left:154px;top:383px;width:74px;height:17px"></div>
<div class="f fy" style="left:232px;top:340px;width:22px;height:17px"></div>
<span class="t s" style="top:344.90px;left:236.00px;">**</span>
<div class="f" style="left:232px;top:361px;width:22px;height:18px"></div>
<div class="f" style="left:232px;top:383px;width:22px;height:17px"></div>
<div class="f fy" style="left:258px;top:340px;width:24px;height:17px"></div>
<span class="t s" style="top:344.90px;left:262.00px;">*</span>
<div class="f" style="left:258px;top:361px;width:24px;height:18px"></div>
<div class="f" style="left:258px;top:383px;width:24px;height:17px"></div>
<div class="f fy" style="left:286px;top:340px;width:23px;height:17px"></div>
<span class="t s" style="top:344.90px;left:290.00px;">*</span>
<div class="f" style="left:286px;top:361px;width:23px;height:18px"></div>
<div class="f" style="left:286px;top:383px;width:23px;height:17px"></div>
<div class="f fy" style="left:313px;top:340px;width:21px;height:17px"></div>
<span class="t s" style="top:344.90px;left:317.00px;">*</span>
<div class="f" style="left:313px;top:361px;width:21px;height:18px"></div>
<div class="f" style="left:313px;top:383px;width:21px;height:17px"></div>
<div class="f fy" style="left:338px;top:340px;width:20px;height:17px"></div>
<span class="t s" style="top:344.90px;left:342.00px;">*</span>
<div class="f" style="left:338px;top:361px;width:20px;height:18px"></div>
<div class="f" style="left:338px;top:383px;width:20px;height:17px"></div>
<div class="f fy" style="left:362px;top:340px;width:22px;height:17px"></div>
<span class="t s" style="top:344.90px;left:366.00px;">*</span>
<div class="f" style="left:362px;top:361px;width:22px;height:18px"></div>
<div class="f" style="left:362px;top:383px;width:22px;height:17px"></div>
<div class="f fy" style="left:388px;top:340px;width:50px;height:17px"></div>
<span class="t s" style="top:344.90px;left:392.00px;">*****</span>
<div class="f" style="left:388px;top:361px;width:50px;height:18px"></div>
<div class="f" style="left:388px;top:383px;width:50px;height:17px"></div>
<div class="f fy" style="left:442px;top:340px;width:72px;height:17px"></div>
<span class="t s" style="top:344.90px;left:446.00px;">******</span>
<div class="f" style="left:442px;top:361px;width:72px;height:18px"></div>
<div class="f" style="left:442px;top:383px;width:72px;height:17px"></div>
<div class="f fy" style="left:518px;top:340px;width:64px;height:17px"></div>
<span class="t s" style="top:344.90px;right:440.50px;">*****</span>
<div class="f" style="left:518px;top:361px;width:64px;height:18px"></div>
<div class="f" style="left:518px;top:383px;width:64px;height:17px"></div>
<div class="f fy" style="left:586px;top:340px;width:17px;height:17px"></div>
<span class="t s" style="top:344.90px;left:590.00px;">**</span>
<div class="f" style="left:586px;top:361px;width:17px;height:18px"></div>
<div class="f" style="left:586px;top:383px;width:17px;height:17px"></div>
<div class="f fy" style="left:608px;top:340px;width:30px;height:17px"></div>
<span class="t s" style="top:344.90px;left:624.40px;transform:translateX(-50%);">*</span>
<div class="f" style="left:608px;top:361px;width:30px;height:18px"></div>
<div class="f" style="left:608px;top:383px;width:30px;height:17px"></div>
<div class="f fy" style="left:642px;top:340px;width:83px;height:17px"></div>
<span class="t s" style="top:344.90px;right:297.50px;">*******</span>
<div class="f" style="left:642px;top:361px;width:83px;height:18px"></div>
<div class="f" style="left:642px;top:383px;width:83px;height:17px"></div>
<div class="f fy" style="left:729px;top:340px;width:83px;height:17px"></div>
<span class="t s" style="top:344.90px;right:210.50px;">*******</span>
<div class="f" style="left:729px;top:361px;width:83px;height:18px"></div>
<div class="f" style="left:729px;top:383px;width:83px;height:17px"></div>
<div class="f fy" style="left:816px;top:340px;width:25px;height:17px"></div>
<div class="f" style="left:816px;top:361px;width:25px;height:18px"></div>
<div class="f" style="left:816px;top:383px;width:25px;height:17px"></div>
<div class="f fy" style="left:845px;top:340px;width:25px;height:17px"></div>
<div class="f" style="left:845px;top:361px;width:25px;height:18px"></div>
<div class="f" style="left:845px;top:383px;width:25px;height:17px"></div>
<div class="f fy" style="left:874px;top:340px;width:26px;height:17px"></div>
<span class="t s" style="top:344.90px;left:888.40px;transform:translateX(-50%);">**</span>
<div class="f" style="left:874px;top:361px;width:26px;height:18px"></div>
<div class="f" style="left:874px;top:383px;width:26px;height:17px"></div>
<div class="f fy" style="left:904px;top:340px;width:25px;height:17px"></div>
<span class="t s" style="top:345.70px;left:917.90px;transform:translateX(-50%);">**</span>
<div class="f" style="left:904px;top:361px;width:25px;height:18px"></div>
<div class="f" style="left:904px;top:383px;width:25px;height:17px"></div>
<div class="f fy" style="left:933px;top:340px;width:66px;height:17px"></div>
<div class="f" style="left:933px;top:361px;width:66px;height:18px"></div>
<div class="f" style="left:933px;top:383px;width:66px;height:17px"></div>
<span class="t" style="top:324.99px;font-size:11px;line-height:13px;right:949.70px;transform-origin:100% 50%;transform:scaleX(0.9458);">Material</span>
<span class="t" style="top:324.99px;font-size:11px;line-height:13px;left:79.40px;transform-origin:0 50%;transform:scaleX(0.9368);">Ordem Compra</span>
<span class="t" style="top:324.99px;font-size:11px;line-height:13px;left:165.00px;transform-origin:0 50%;transform:scaleX(0.9719);">Solicitacao</span>
<span class="t" style="top:324.99px;font-size:11px;line-height:13px;left:279.50px;transform:translateX(-50%) scaleX(0.9619);">Secao</span>
<div style="left:235px;top:338px;width:98px;height:1px;background:#222"></div>
<span class="t" style="top:324.99px;font-size:11px;line-height:13px;left:338.20px;transform-origin:0 50%;transform:scaleX(0.9767);">Despesa</span>
<span class="t" style="top:324.99px;font-size:11px;line-height:13px;left:404.70px;transform-origin:0 50%;transform:scaleX(0.9342);">Lote</span>
<span class="t" style="top:324.99px;font-size:11px;line-height:13px;left:455.30px;transform-origin:0 50%;transform:scaleX(0.9434);">Qtde Nota</span>
<span class="t" style="top:324.99px;font-size:11px;line-height:13px;left:524.60px;transform-origin:0 50%;transform:scaleX(0.9559);">Vlr Unitario</span>
<span class="t" style="top:324.99px;font-size:11px;line-height:13px;left:589.50px;transform-origin:0 50%;transform:scaleX(0.8392);">Un</span>
<span class="t" style="top:324.99px;font-size:11px;line-height:13px;left:612.20px;transform-origin:0 50%;transform:scaleX(0.9582);">Fator</span>
<span class="t" style="top:324.99px;font-size:11px;line-height:13px;left:656.50px;transform-origin:0 50%;transform:scaleX(0.9442);">Qtd Entrada</span>
<span class="t" style="top:324.99px;font-size:11px;line-height:13px;left:743.60px;transform-origin:0 50%;transform:scaleX(0.9743);">Vlr. Entrada</span>
<span class="t" style="top:324.99px;font-size:11px;line-height:13px;left:818.80px;transform-origin:0 50%;transform:scaleX(0.8866);">Red.</span>
<span class="t" style="top:324.99px;font-size:11px;line-height:13px;left:847.60px;transform-origin:0 50%;transform:scaleX(0.9044);">Icms</span>
<span class="t" style="top:324.99px;font-size:11px;line-height:13px;left:882.30px;transform-origin:0 50%;transform:scaleX(0.8952);">Ipi</span>
<span class="t" style="top:312.19px;font-size:11px;line-height:13px;left:916.80px;transform:translateX(-50%) scaleX(0.9500);">%</span>
<span class="t" style="top:327.39px;font-size:11px;line-height:13px;left:917.20px;transform:translateX(-50%) scaleX(0.8040);">Imp.</span>
<span class="t" style="top:311.69px;font-size:11px;line-height:13px;left:965.20px;transform:translateX(-50%) scaleX(0.9838);">Vlr Custo</span>
<span class="t" style="top:327.39px;font-size:11px;line-height:13px;left:967.30px;transform:translateX(-50%) scaleX(0.9487);">Importação</span>
<span class="t" style="top:410.19px;font-size:11px;line-height:13px;right:953.20px;transform-origin:100% 50%;transform:scaleX(0.9305);">Material</span>
<div class="f fg" style="left:72px;top:406px;width:281px;height:17px"></div>
<span class="t s" style="top:408.90px;left:74.00px;">*************</span>
<span class="t" style="top:410.19px;font-size:11px;line-height:13px;right:628.00px;transform-origin:100% 50%;transform:scaleX(0.9277);">Destino</span>
<div class="f fg" style="left:398px;top:406px;width:220px;height:17px"></div>
<span class="t s" style="top:408.90px;left:400.00px;">************</span>
<span class="t" style="top:410.19px;font-size:11px;line-height:13px;right:348.60px;transform-origin:100% 50%;transform:scaleX(0.9689);">Operação</span>
<div class="f fg" style="left:677px;top:406px;width:188px;height:17px"></div>
<span class="t s" style="top:408.90px;left:679.00px;">***********</span>
<div class="b" style="left:906px;top:409px;width:95px;height:16px"></div>
<span class="t" style="top:412.19px;font-size:11px;line-height:13px;left:954.50px;transform:translateX(-50%) scaleX(0.9783);">Lote / Validade</span>
<div class="hl" style="left:8px;top:431px;width:1000px"></div>
<span class="t" style="top:440.19px;font-size:11px;line-height:13px;right:946.40px;transform-origin:100% 50%;transform:scaleX(0.9582);">Base Icms</span>
<div class="f" style="left:81px;top:436px;width:97px;height:17px"></div>
<span class="t s" style="top:438.40px;right:844.00px;">*******</span>
<span class="t" style="top:440.19px;font-size:11px;line-height:13px;right:795.90px;transform-origin:100% 50%;transform:scaleX(0.9643);">Vlr Icms</span>
<div class="f" style="left:232px;top:436px;width:96px;height:17px"></div>
<span class="t s" style="top:439.40px;right:699.00px;">***</span>
<span class="t" style="top:440.19px;font-size:11px;line-height:13px;right:617.50px;transform-origin:100% 50%;transform:scaleX(0.9693);">Base Icms S.T.</span>
<div class="f" style="left:410px;top:436px;width:96px;height:17px"></div>
<span class="t s" style="top:437.90px;right:519.00px;">***</span>
<span class="t" style="top:440.19px;font-size:11px;line-height:13px;right:449.40px;transform-origin:100% 50%;transform:scaleX(0.9753);">Vlr Icms S.T.</span>
<div class="f" style="left:578px;top:436px;width:96px;height:17px"></div>
<span class="t s" style="top:438.40px;right:352.50px;">***</span>
<span class="t" style="top:440.19px;font-size:11px;line-height:13px;right:264.40px;transform-origin:100% 50%;transform:scaleX(0.9504);">Vlr Iicms Deson.</span>
<div class="f" style="left:764px;top:436px;width:96px;height:17px"></div>
<span class="t" style="top:440.19px;font-size:11px;line-height:13px;right:122.60px;transform-origin:100% 50%;transform:scaleX(0.9745);">Vlr Ipi</span>
<div class="f" style="left:904px;top:436px;width:96px;height:17px"></div>
<span class="t s" style="top:439.90px;right:22.00px;">***</span>
<span class="t" style="top:464.19px;font-size:11px;line-height:13px;right:946.40px;transform-origin:100% 50%;transform:scaleX(0.9767);">Despesa</span>
<div class="f" style="left:81px;top:460px;width:97px;height:17px"></div>
<span class="t" style="top:464.19px;font-size:11px;line-height:13px;right:796.00px;transform-origin:100% 50%;transform:scaleX(0.9116);">Pedagio</span>
<div class="f" style="left:232px;top:460px;width:96px;height:17px"></div>
<span class="t" style="top:464.19px;font-size:11px;line-height:13px;right:617.50px;transform-origin:100% 50%;transform:scaleX(0.9705);">Desconto</span>
<div class="f" style="left:410px;top:460px;width:96px;height:17px"></div>
<span class="t" style="top:464.19px;font-size:11px;line-height:13px;right:449.40px;transform-origin:100% 50%;transform:scaleX(0.9505);">Frete</span>
<div class="f" style="left:578px;top:460px;width:96px;height:17px"></div>
<span class="t" style="top:464.19px;font-size:11px;line-height:13px;right:301.30px;transform-origin:100% 50%;transform:scaleX(0.9455);">Retorno</span>
<div class="f" style="left:726px;top:460px;width:96px;height:17px"></div>
<span class="t" style="top:464.19px;font-size:11px;line-height:13px;right:122.60px;transform-origin:100% 50%;transform:scaleX(1.0242);">Vlr. Total</span>
<div class="f" style="left:904px;top:460px;width:96px;height:17px"></div>
<span class="t s" style="top:465.40px;right:22.00px;">******</span>
<span class="t" style="top:488.19px;font-size:11px;line-height:13px;right:946.40px;transform-origin:100% 50%;transform:scaleX(0.9707);">Base Ibs Cbs</span>
<div class="f" style="left:81px;top:484px;width:97px;height:17px"></div>
<span class="t s" style="top:485.90px;right:845.00px;">***</span>
<span class="t" style="top:488.19px;font-size:11px;line-height:13px;right:796.00px;transform-origin:100% 50%;transform:scaleX(0.9919);">Vlr. Cbs</span>
<div class="f" style="left:232px;top:484px;width:96px;height:17px"></div>
<span class="t s" style="top:487.90px;right:695.00px;">***</span>
<span class="t" style="top:488.19px;font-size:11px;line-height:13px;right:617.00px;transform-origin:100% 50%;transform:scaleX(1.0025);">Vlr. Ibs Uf</span>
<div class="f" style="left:410px;top:484px;width:96px;height:17px"></div>
<span class="t s" style="top:488.40px;right:517.50px;">***</span>
<span class="t" style="top:488.19px;font-size:11px;line-height:13px;right:449.40px;transform-origin:100% 50%;transform:scaleX(0.9746);">Vlr. Ibs Mun</span>
<div class="f" style="left:578px;top:484px;width:96px;height:17px"></div>
<span class="t s" style="top:488.50px;right:350.20px;">***</span>
<span class="t" style="top:488.19px;font-size:11px;line-height:13px;right:301.30px;transform-origin:100% 50%;transform:scaleX(0.9568);">Base Is</span>
<div class="f" style="left:726px;top:484px;width:96px;height:17px"></div>
<span class="t s" style="top:488.50px;right:202.00px;">***</span>
<span class="t" style="top:488.19px;font-size:11px;line-height:13px;right:123.20px;transform-origin:100% 50%;transform:scaleX(1.0034);">Vlr. Is</span>
<div class="f" style="left:904px;top:484px;width:96px;height:17px"></div>
<span class="t s" style="top:489.60px;right:24.50px;">***</span>
<div class="b" style="left:829px;top:461px;width:16px;height:16px;background:#c4c4c4;border-color:#b4b4b4 #7f9cc4 #7f9cc4 #b4b4b4"></div>
<svg style="left:829px;top:460px" width="19" height="19" viewBox="829 460 19 19"><circle cx="837.7" cy="468.9" r="7" fill="#ececec" stroke="#000" stroke-width="1.1"/><path d="M836.2 464H839.2V467H842V470H839.2V473H836.2V470H833.1V467H836.2Z" fill="#00008b"/><rect x="834.6" y="465.2" width="1.2" height="1" fill="#5ff"/></svg>
<div class="hl" style="left:8px;top:507px;width:1000px"></div>
<div class="sb" style="left:20px;top:530px;width:11px;height:40px"></div>
<svg class="a" style="left:22.5px;top:535.5px" width="8" height="4"><path d="M.2 4H7.8L4 0Z" fill="#5a5f7a"/></svg>
<svg class="a" style="left:22.5px;top:562px" width="8" height="4"><path d="M.2 0H7.8L4 4Z" fill="#5a5f7a"/></svg>
<div style="position:absolute;left:21px;top:543.5px;width:11px;height:1px;background:#65738f"></div>
<div style="position:absolute;left:21px;top:556.5px;width:11px;height:1px;background:#7c98c4"></div>
<svg class="a" style="left:22.5px;top:546.0px" width="9" height="8"><path d="M6 1.6L7.6 .2M1 6.4L2.8 4.8" stroke="#8a9cc0" stroke-width="1"/></svg>
<div class="f fy" style="left:35px;top:531px;width:97px;height:17px"></div>
<span class="t s" style="top:534.90px;left:39.00px;">*****</span>
<div class="f" style="left:35px;top:552px;width:97px;height:18px"></div>
<div class="f fy" style="left:137px;top:531px;width:60px;height:17px"></div>
<div class="da" style="left:184px;top:533px;width:13px;height:15px"></div>
<svg class="a" style="left:186.5px;top:538.5px" width="8" height="5"><path d="M.3 0H7.7L4 4Z" fill="#66687e"/></svg>
<span class="t s" style="top:535.90px;left:141.00px;">***</span>
<div class="f" style="left:137px;top:552px;width:60px;height:18px"></div>
<div class="da" style="left:184px;top:554px;width:13px;height:16px"></div>
<svg class="a" style="left:186.5px;top:560.0px" width="8" height="5"><path d="M.3 0H7.7L4 4Z" fill="#b4b8c4"/></svg>
<div class="f fy" style="left:202px;top:531px;width:38px;height:17px"></div>
<span class="t s" style="top:537.90px;right:784.50px;">**</span>
<div class="f" style="left:202px;top:552px;width:38px;height:18px"></div>
<div class="f fy" style="left:245px;top:531px;width:116px;height:17px"></div>
<span class="t s" style="top:536.90px;right:669.00px;">***</span>
<div class="f" style="left:245px;top:552px;width:116px;height:18px"></div>
<div class="f fy" style="left:365px;top:531px;width:117px;height:17px"></div>
<span class="t s" style="top:535.90px;left:428.40px;transform:translateX(-50%);">*****</span>
<div class="f" style="left:365px;top:552px;width:117px;height:18px"></div>
<div class="f fy" style="left:486px;top:531px;width:116px;height:17px"></div>
<span class="t s" style="top:537.10px;left:550.40px;transform:translateX(-50%);">*****</span>
<div class="f" style="left:486px;top:552px;width:116px;height:18px"></div>
<div class="f fy" style="left:606px;top:531px;width:117px;height:17px"></div>
<span class="t s" style="top:537.10px;left:668.90px;transform:translateX(-50%);">*****</span>
<div class="f" style="left:606px;top:552px;width:117px;height:18px"></div>
<div class="f fy" style="left:728px;top:531px;width:117px;height:17px"></div>
<span class="t s" style="top:535.30px;left:789.90px;transform:translateX(-50%);">******</span>
<div class="f" style="left:728px;top:552px;width:117px;height:18px"></div>
<span class="t" style="top:514.29px;font-size:11px;line-height:13px;left:61.60px;transform-origin:0 50%;transform:scaleX(0.9646);">Natureza.</span>
<span class="t" style="top:514.29px;font-size:11px;line-height:13px;left:158.20px;transform-origin:0 50%;transform:scaleX(0.9386);">Tipo</span>
<span class="t" style="top:514.29px;font-size:11px;line-height:13px;left:221.00px;transform:translateX(-50%) scaleX(0.9500);">%</span>
<span class="t" style="top:514.29px;font-size:11px;line-height:13px;left:271.50px;transform-origin:0 50%;transform:scaleX(0.9516);">Base Imposto</span>
<span class="t" style="top:514.29px;font-size:11px;line-height:13px;left:397.90px;transform-origin:0 50%;transform:scaleX(0.9438);">Vlr Imposto</span>
<span class="t" style="top:514.29px;font-size:11px;line-height:13px;left:516.40px;transform-origin:0 50%;transform:scaleX(0.9882);">Valor Isento</span>
<span class="t" style="top:514.29px;font-size:11px;line-height:13px;left:634.60px;transform-origin:0 50%;transform:scaleX(0.9979);">Valor Outros</span>
<span class="t" style="top:514.29px;font-size:11px;line-height:13px;left:753.40px;transform-origin:0 50%;transform:scaleX(0.9828);">Valor Contabil</span>
<div class="b" style="left:933px;top:510px;width:69px;height:17px"></div>
<span class="t" style="top:512.69px;font-size:11px;line-height:13px;left:968.50px;transform:translateX(-50%) scaleX(0.9523);">Impostos</span>
<div class="b" style="left:852px;top:531px;width:54px;height:17px"></div>
<span class="t" style="top:534.69px;font-size:11px;line-height:13px;left:880.00px;transform:translateX(-50%) scaleX(0.9790);">Despesa</span>
<div class="b" style="left:913px;top:531px;width:89px;height:17px"></div>
<span class="t" style="top:534.69px;font-size:11px;line-height:13px;left:958.50px;transform:translateX(-50%) scaleX(0.9761);">Dados Do Livro</span>
<div class="b bd" style="left:852px;top:552px;width:75px;height:17px"></div>
<span class="t" style="top:556.39px;font-size:11px;line-height:13px;color:#9a9a9a;left:890.50px;transform:translateX(-50%) scaleX(0.9875);">Obs. Livro</span>
<div class="b" style="left:933px;top:552px;width:69px;height:17px"></div>
<span class="t" style="top:556.39px;font-size:11px;line-height:13px;left:968.50px;transform:translateX(-50%) scaleX(0.9719);">Remessas</span>
<div style="left:943.5px;top:567px;width:7px;height:1px;background:#000"></div>
<div class="hl" style="left:8px;top:575px;width:1000px"></div>
<div style="left:5px;top:607px;width:182px;height:21px;background:#8eb6de;border:1px solid #5f8cc4;border-top:none;border-radius:0 0 6px 6px;box-sizing:border-box"></div>
<div style="left:190px;top:608px;width:60px;height:20px;background:#c9d9ee;border-radius:0 0 5px 5px"></div>
<div style="left:253px;top:608px;width:60px;height:20px;background:#c9d9ee;border-radius:0 0 5px 5px"></div>
<span class="t" style="top:611.89px;font-size:11px;line-height:13px;left:13.10px;transform-origin:0 50%;transform:scaleX(0.9738);">Consulta/Deleção de Notas Fiscais</span>
<span class="t" style="top:611.89px;font-size:11px;line-height:13px;color:#333;left:197.00px;transform-origin:0 50%;transform:scaleX(0.9592);">Relatorios</span>
<span class="t" style="top:611.89px;font-size:11px;line-height:13px;color:#333;left:263.20px;transform-origin:0 50%;transform:scaleX(0.9320);">Planilhas</span>
</div></body></html>
